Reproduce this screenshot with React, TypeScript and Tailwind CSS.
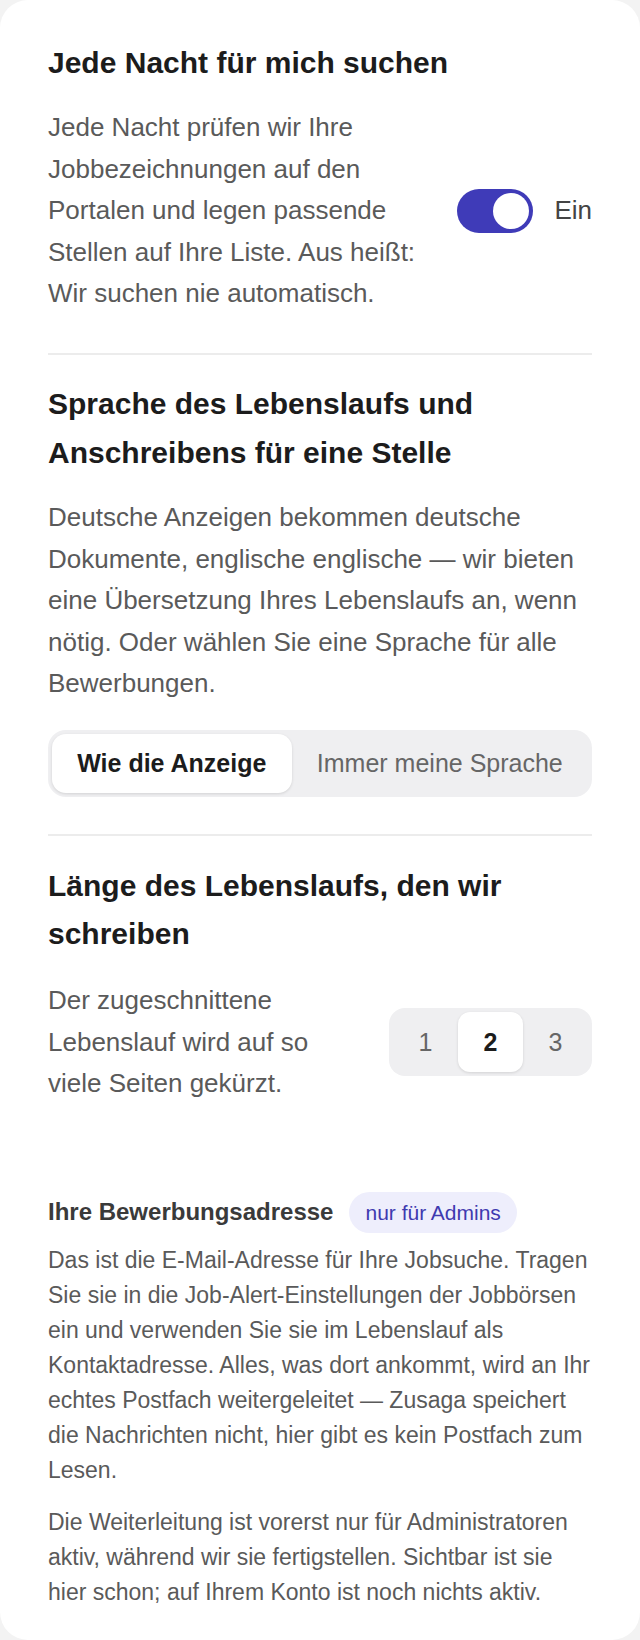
import { useState } from "react";

const Divider = () => <div className="h-[2px] bg-[#ececec]" />;

const Toggle = ({ on, onChange }: { on: boolean; onChange: (v: boolean) => void }) => (
  <button
    type="button"
    onClick={() => onChange(!on)}
    className={`flex h-[44px] w-[76px] shrink-0 items-center rounded-full p-[4px] ${
      on ? "justify-end bg-[#3f3bb8]" : "justify-start bg-[#d4d4d8]"
    }`}
  >
    <span className="h-[36px] w-[36px] rounded-full bg-white" />
  </button>
);

export default function App() {
  const [nightly, setNightly] = useState(true);
  const [lang, setLang] = useState<"ad" | "mine">("ad");
  const [pages, setPages] = useState(2);

  return (
    <div
      className="min-h-screen bg-[#f3f3f3]"
      style={{ fontFamily: '"Liberation Sans", Arial, sans-serif' }}
    >
      <div className="flex min-h-screen flex-col rounded-[28px] bg-white px-[48px] pt-[39px] pb-[30px]">
        {/* nightly search */}
        <section className="pb-[38px]">
          <h2 className="text-[30px] font-bold leading-[48px] text-[#1c1c1c]">
            Jede Nacht für mich suchen
          </h2>
          <div className="mt-[20px] flex items-center justify-between">
            <p className="max-w-[392px] text-[26px] leading-[41.6px] text-[#5a5a5a]">
              Jede Nacht prüfen wir Ihre Jobbezeichnungen auf den Portalen und legen passende
              Stellen auf Ihre Liste. Aus heißt: Wir suchen nie automatisch.
            </p>
            <div className="flex items-center gap-[21px]">
              <Toggle on={nightly} onChange={setNightly} />
              <span className="text-[26px] text-[#444]">{nightly ? "Ein" : "Aus"}</span>
            </div>
          </div>
        </section>

        <Divider />

        {/* document language */}
        <section className="pt-[24px] pb-[37px]">
          <h2 className="text-[30px] font-bold leading-[49px] text-[#1c1c1c]">
            Sprache des Lebenslaufs und Anschreibens für eine Stelle
          </h2>
          <p className="mt-[20px] text-[26px] leading-[41.6px] text-[#5a5a5a]">
            Deutsche Anzeigen bekommen deutsche Dokumente, englische englische — wir bieten eine
            Übersetzung Ihres Lebenslaufs an, wenn nötig. Oder wählen Sie eine Sprache für alle
            Bewerbungen.
          </p>
          <div className="mt-[25px] flex rounded-[18px] bg-[#efeff1] p-[4px]">
            <button
              type="button"
              onClick={() => setLang("ad")}
              className={`h-[59px] flex-auto rounded-[14px] px-[24px] text-[25px] ${
                lang === "ad"
                  ? "bg-white font-bold text-[#1c1c1c] shadow-[0_1px_3px_rgba(0,0,0,0.12)]"
                  : "text-[#666]"
              }`}
            >
              Wie die Anzeige
            </button>
            <button
              type="button"
              onClick={() => setLang("mine")}
              className={`h-[59px] flex-auto rounded-[14px] px-[24px] text-[25px] ${
                lang === "mine"
                  ? "bg-white font-bold text-[#1c1c1c] shadow-[0_1px_3px_rgba(0,0,0,0.12)]"
                  : "text-[#666]"
              }`}
            >
              Immer meine Sprache
            </button>
          </div>
        </section>

        <Divider />

        {/* cv length */}
        <section className="pt-[26px]">
          <h2 className="text-[30px] font-bold leading-[48px] text-[#1c1c1c]">
            Länge des Lebenslaufs, den wir schreiben
          </h2>
          <div className="mt-[22px] flex items-center justify-between">
            <p className="max-w-[295px] text-[26px] leading-[41.6px] text-[#5a5a5a]">
              Der zugeschnittene Lebenslauf wird auf so viele Seiten gekürzt.
            </p>
            <div className="flex rounded-[16px] bg-[#efeff1] p-[4px]">
              {[1, 2, 3].map((n) => (
                <button
                  key={n}
                  type="button"
                  onClick={() => setPages(n)}
                  className={`h-[60px] w-[65px] rounded-[12px] text-[25px] ${
                    pages === n
                      ? "bg-white font-bold text-[#1c1c1c] shadow-[0_1px_3px_rgba(0,0,0,0.12)]"
                      : "text-[#666]"
                  }`}
                >
                  {n}
                </button>
              ))}
            </div>
          </div>
        </section>

        {/* forwarding address */}
        <section className="mt-[87px]">
          <div className="flex items-center gap-[16px]">
            <h3 className="text-[24px] font-bold text-[#3a3a3a]">Ihre Bewerbungsadresse</h3>
            <span className="rounded-full bg-[#eeeefc] px-[16px] text-[21px] leading-[41px] text-[#3f3ab0]">
              nur für Admins
            </span>
          </div>
          <p className="mt-[10px] text-[23px] leading-[35px] text-[#5a5a5a]">
            Das ist die E-Mail-Adresse für Ihre Jobsuche. Tragen Sie sie in die
            Job-Alert-Einstellungen der Jobbörsen ein und verwenden Sie sie im Lebenslauf als
            Kontaktadresse. Alles, was dort ankommt, wird an Ihr echtes Postfach weitergeleitet —
            Zusaga speichert die Nachrichten nicht, hier gibt es kein Postfach zum Lesen.
          </p>
          <p className="mt-[17px] text-[23px] leading-[35px] text-[#5a5a5a]">
            Die Weiterleitung ist vorerst nur für Administratoren aktiv, während wir sie
            fertigstellen. Sichtbar ist sie hier schon; auf Ihrem Konto ist noch nichts aktiv.
          </p>
        </section>
      </div>
    </div>
  );
}
